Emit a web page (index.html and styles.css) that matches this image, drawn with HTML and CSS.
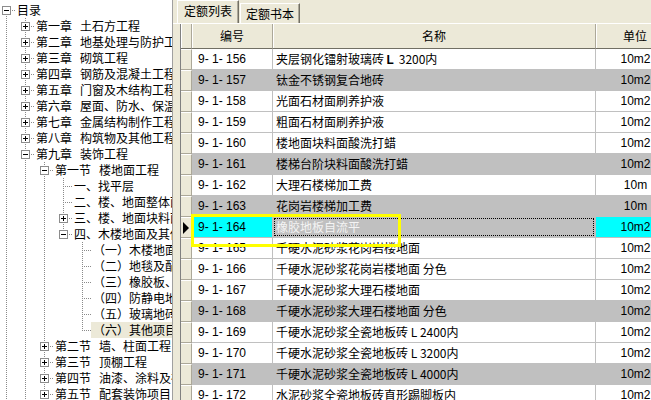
FILE: index.html
```html
<!DOCTYPE html>
<html lang="zh-CN">
<head>
<meta charset="utf-8">
<title>定额列表</title>
<link rel="stylesheet" href="styles.css">
</head>
<body>
<div class="app">
  <div class="tree">
    <div class="node"><i class="b first"><svg class="box" width="9" height="9"><rect x=".5" y=".5" width="8" height="8"/><path d="M2 4.5h5"/></svg></i><span class="t">目录</span></div>
    <div class="node"><i class="g"></i><i class="b"><svg class="box" width="9" height="9"><rect x=".5" y=".5" width="8" height="8"/><path d="M2 4.5h5M4.5 2v5"/></svg></i><span class="t"><span class="k">第一章</span>土石方工程</span></div>
    <div class="node"><i class="g"></i><i class="b"><svg class="box" width="9" height="9"><rect x=".5" y=".5" width="8" height="8"/><path d="M2 4.5h5M4.5 2v5"/></svg></i><span class="t"><span class="k">第二章</span>地基处理与防护工程</span></div>
    <div class="node"><i class="g"></i><i class="b"><svg class="box" width="9" height="9"><rect x=".5" y=".5" width="8" height="8"/><path d="M2 4.5h5M4.5 2v5"/></svg></i><span class="t"><span class="k">第三章</span>砌筑工程</span></div>
    <div class="node"><i class="g"></i><i class="b"><svg class="box" width="9" height="9"><rect x=".5" y=".5" width="8" height="8"/><path d="M2 4.5h5M4.5 2v5"/></svg></i><span class="t"><span class="k">第四章</span>钢筋及混凝土工程</span></div>
    <div class="node"><i class="g"></i><i class="b"><svg class="box" width="9" height="9"><rect x=".5" y=".5" width="8" height="8"/><path d="M2 4.5h5M4.5 2v5"/></svg></i><span class="t"><span class="k">第五章</span>门窗及木结构工程</span></div>
    <div class="node"><i class="g"></i><i class="b"><svg class="box" width="9" height="9"><rect x=".5" y=".5" width="8" height="8"/><path d="M2 4.5h5M4.5 2v5"/></svg></i><span class="t"><span class="k">第六章</span>屋面、防水、保温及防腐工程</span></div>
    <div class="node"><i class="g"></i><i class="b"><svg class="box" width="9" height="9"><rect x=".5" y=".5" width="8" height="8"/><path d="M2 4.5h5M4.5 2v5"/></svg></i><span class="t"><span class="k">第七章</span>金属结构制作工程</span></div>
    <div class="node"><i class="g"></i><i class="b"><svg class="box" width="9" height="9"><rect x=".5" y=".5" width="8" height="8"/><path d="M2 4.5h5M4.5 2v5"/></svg></i><span class="t"><span class="k">第八章</span>构筑物及其他工程</span></div>
    <div class="node"><i class="g"></i><i class="b"><svg class="box" width="9" height="9"><rect x=".5" y=".5" width="8" height="8"/><path d="M2 4.5h5"/></svg></i><span class="t"><span class="k">第九章</span>装饰工程</span></div>
    <div class="node"><i class="g"></i><i class="g"></i><i class="b"><svg class="box" width="9" height="9"><rect x=".5" y=".5" width="8" height="8"/><path d="M2 4.5h5"/></svg></i><span class="t"><span class="k">第一节</span>楼地面工程</span></div>
    <div class="node"><i class="g"></i><i class="g"></i><i class="g"></i><i class="b"></i><span class="t">一、找平层</span></div>
    <div class="node"><i class="g"></i><i class="g"></i><i class="g"></i><i class="b"></i><span class="t">二、楼、地面整体面层</span></div>
    <div class="node"><i class="g"></i><i class="g"></i><i class="g"></i><i class="b"><svg class="box" width="9" height="9"><rect x=".5" y=".5" width="8" height="8"/><path d="M2 4.5h5M4.5 2v5"/></svg></i><span class="t">三、楼、地面块料面层</span></div>
    <div class="node"><i class="g"></i><i class="g"></i><i class="g"></i><i class="b last"><svg class="box" width="9" height="9"><rect x=".5" y=".5" width="8" height="8"/><path d="M2 4.5h5"/></svg></i><span class="t">四、木楼地面及其他</span></div>
    <div class="node"><i class="g"></i><i class="g"></i><i class="g"></i><i class="g off"></i><i class="b"></i><span class="t">（一）木楼地面</span></div>
    <div class="node"><i class="g"></i><i class="g"></i><i class="g"></i><i class="g off"></i><i class="b"></i><span class="t">（二）地毯及配件</span></div>
    <div class="node"><i class="g"></i><i class="g"></i><i class="g"></i><i class="g off"></i><i class="b"></i><span class="t">（三）橡胶板、塑料板</span></div>
    <div class="node"><i class="g"></i><i class="g"></i><i class="g"></i><i class="g off"></i><i class="b"></i><span class="t">（四）防静电地板</span></div>
    <div class="node"><i class="g"></i><i class="g"></i><i class="g"></i><i class="g off"></i><i class="b"></i><span class="t">（五）玻璃地砖</span></div>
    <div class="node"><i class="g"></i><i class="g"></i><i class="g"></i><i class="g off"></i><i class="b last"></i><span class="t sel">（六）其他项目</span></div>
    <div class="node"><i class="g"></i><i class="g"></i><i class="b"><svg class="box" width="9" height="9"><rect x=".5" y=".5" width="8" height="8"/><path d="M2 4.5h5M4.5 2v5"/></svg></i><span class="t"><span class="k">第二节</span>墙、柱面工程</span></div>
    <div class="node"><i class="g"></i><i class="g"></i><i class="b"><svg class="box" width="9" height="9"><rect x=".5" y=".5" width="8" height="8"/><path d="M2 4.5h5M4.5 2v5"/></svg></i><span class="t"><span class="k">第三节</span>顶棚工程</span></div>
    <div class="node"><i class="g"></i><i class="g"></i><i class="b"><svg class="box" width="9" height="9"><rect x=".5" y=".5" width="8" height="8"/><path d="M2 4.5h5M4.5 2v5"/></svg></i><span class="t"><span class="k">第四节</span>油漆、涂料及裱糊工程</span></div>
    <div class="node"><i class="g"></i><i class="g"></i><i class="b"><svg class="box" width="9" height="9"><rect x=".5" y=".5" width="8" height="8"/><path d="M2 4.5h5M4.5 2v5"/></svg></i><span class="t"><span class="k">第五节</span>配套装饰项目</span></div>
  </div>

  <div class="main">
    <div class="tabs">
      <div class="tab active">定额列表</div>
      <div class="tab">定额书本</div>
    </div>
    <div class="page">
      <div class="grid">
        <div class="row head">
          <div class="ind"></div>
          <div class="c code">编号</div>
          <div class="c name">名称</div>
          <div class="c unit">单位</div>
        </div>
        <div class="row"><div class="ind"></div><div class="c code">9- 1- 156</div><div class="c name">夹层钢化镭射玻璃砖<b class="fl">Ｌ</b> 3200内</div><div class="c unit">10m2</div></div>
        <div class="row gray"><div class="ind"></div><div class="c code">9- 1- 157</div><div class="c name">钛金不锈钢复合地砖</div><div class="c unit">10m2</div></div>
        <div class="row"><div class="ind"></div><div class="c code">9- 1- 158</div><div class="c name">光面石材面刷养护液</div><div class="c unit">10m2</div></div>
        <div class="row"><div class="ind"></div><div class="c code">9- 1- 159</div><div class="c name">粗面石材面刷养护液</div><div class="c unit">10m2</div></div>
        <div class="row"><div class="ind"></div><div class="c code">9- 1- 160</div><div class="c name">楼地面块料面酸洗打蜡</div><div class="c unit">10m2</div></div>
        <div class="row gray"><div class="ind"></div><div class="c code">9- 1- 161</div><div class="c name">楼梯台阶块料面酸洗打蜡</div><div class="c unit">10m2</div></div>
        <div class="row"><div class="ind"></div><div class="c code">9- 1- 162</div><div class="c name">大理石楼梯加工费</div><div class="c unit">10m</div></div>
        <div class="row gray"><div class="ind"></div><div class="c code">9- 1- 163</div><div class="c name">花岗岩楼梯加工费</div><div class="c unit">10m</div></div>
        <div class="row current"><div class="ind"><i class="arrow"></i></div><div class="c code">9- 1- 164</div><div class="c name"><span class="focus">橡胶地板自流平</span></div><div class="c unit">10m2</div></div>
        <div class="row"><div class="ind"></div><div class="c code">9- 1- 165</div><div class="c name">千硬水泥砂浆花岗岩楼地面</div><div class="c unit">10m2</div></div>
        <div class="row"><div class="ind"></div><div class="c code">9- 1- 166</div><div class="c name">千硬水泥砂浆花岗岩楼地面 分色</div><div class="c unit">10m2</div></div>
        <div class="row"><div class="ind"></div><div class="c code">9- 1- 167</div><div class="c name">千硬水泥砂浆大理石楼地面</div><div class="c unit">10m2</div></div>
        <div class="row gray"><div class="ind"></div><div class="c code">9- 1- 168</div><div class="c name">千硬水泥砂浆大理石楼地面 分色</div><div class="c unit">10m2</div></div>
        <div class="row"><div class="ind"></div><div class="c code">9- 1- 169</div><div class="c name">千硬水泥砂浆全瓷地板砖 L 2400内</div><div class="c unit">10m2</div></div>
        <div class="row"><div class="ind"></div><div class="c code">9- 1- 170</div><div class="c name">千硬水泥砂浆全瓷地板砖 L 3200内</div><div class="c unit">10m2</div></div>
        <div class="row gray"><div class="ind"></div><div class="c code">9- 1- 171</div><div class="c name">千硬水泥砂浆全瓷地板砖 L 4000内</div><div class="c unit">10m2</div></div>
        <div class="row"><div class="ind"></div><div class="c code">9- 1- 172</div><div class="c name">水泥砂浆全瓷地板砖直形踢脚板内</div><div class="c unit">10m2</div></div>
      </div>
    </div>
    <div class="mark"></div>
  </div>
</div>
</body>
</html>
```

FILE: styles.css
```css
html, body {
  margin: 0;
  padding: 0;
}

body {
  width: 651px;
  height: 400px;
  overflow: hidden;
  background: #ECE9D8;
  font-family: "Noto Sans CJK SC", "Liberation Sans", sans-serif;
  font-size: 12px;
  color: #000;
}

.app {
  display: flex;
  height: 400px;
}

/* ---------- tree ---------- */
.tree {
  width: 173px;
  flex: none;
  background: #fff;
  border-right: 1px solid #a0a0a0;
  overflow: hidden;
  padding-top: 2px;
  padding-left: 2px;
  box-sizing: border-box;
}

.node {
  display: flex;
  height: 16px;
  white-space: nowrap;
}

.g, .b {
  display: block;
  flex: none;
  height: 16px;
}

.g {
  width: 19px;
  background: repeating-linear-gradient(to bottom, #8a8a8a 0 1px, transparent 1px 2px) 4px 0 / 1px 16px no-repeat;
}

.g.off {
  background: none;
}

.b {
  width: 13px;
  display: flex;
  align-items: flex-start;
  background:
    repeating-linear-gradient(to bottom, #8a8a8a 0 1px, transparent 1px 2px) 4px 0 / 1px 8px no-repeat,
    repeating-linear-gradient(to bottom, #8a8a8a 0 1px, transparent 1px 2px) 4px 8px / 1px 8px no-repeat,
    repeating-linear-gradient(to right, #8a8a8a 0 1px, transparent 1px 2px) 4px 8px / 9px 1px no-repeat;
}

.b.last {
  background:
    repeating-linear-gradient(to bottom, #8a8a8a 0 1px, transparent 1px 2px) 4px 0 / 1px 8px no-repeat,
    repeating-linear-gradient(to right, #8a8a8a 0 1px, transparent 1px 2px) 4px 8px / 9px 1px no-repeat;
}

.b.first {
  background:
    repeating-linear-gradient(to bottom, #8a8a8a 0 1px, transparent 1px 2px) 4px 8px / 1px 8px no-repeat,
    repeating-linear-gradient(to right, #8a8a8a 0 1px, transparent 1px 2px) 4px 8px / 9px 1px no-repeat;
}

.box {
  display: block;
  margin-top: 4px;
}

.box rect {
  fill: #fff;
  stroke: #8c8c8c;
}

.box path {
  stroke: #000;
  stroke-width: 1;
  shape-rendering: crispEdges;
}

.t {
  padding: 0 2px;
  line-height: 16px;
  height: 16px;
}

.t.sel {
  background: #ECE9D8;
}

.k {
  margin-right: 8px;
}

/* ---------- main ---------- */
.main {
  flex: 1;
  position: relative;
  overflow: hidden;
  display: flex;
  flex-direction: column;
}

.tabs {
  height: 23px;
  display: flex;
  align-items: flex-end;
  padding-left: 4px;
  flex: none;
}

.tab {
  box-sizing: border-box;
  height: 20px;
  padding: 0 5px;
  line-height: 19px;
  border-top: 1px solid #fff;
  border-left: 1px solid #fff;
  border-right: 1px solid #716F64;
  box-shadow: inset -1px 0 0 #ACA899;
  white-space: nowrap;
}

.tab.active {
  height: 23px;
  padding: 0 6px;
  line-height: 20px;
  margin-right: 1px;
}

.page {
  flex: 1;
  border-top: 1px solid #fff;
  padding-left: 7px;
  overflow: hidden;
}

.grid {
  border-left: 1px solid #808080;
  width: 520px;
}

.row {
  display: grid;
  grid-template-columns: 11px 81px 323px 79px;
  height: 21px;
  background: #fff;
}

.row.gray {
  background: #C0C0C0;
}

.ind {
  background: #ECE9D8;
  border-top: 1px solid #fff;
  border-bottom: 1px solid #ACA899;
  border-right: 1px solid #ACA899;
  box-sizing: border-box;
  display: flex;
  align-items: center;
  padding-left: 2px;
}

.c {
  box-sizing: border-box;
  border-right: 1px solid #C0C0C0;
  border-bottom: 1px solid #C0C0C0;
  line-height: 20px;
  white-space: nowrap;
  overflow: hidden;
}

.code, .unit {
  font-family: "Liberation Sans", Arial, sans-serif;
  font-size: 12px;
}

.code {
  padding-left: 6px;
}

.name {
  padding-left: 3px;
}

.unit {
  text-align: center;
  border-right: none;
}

.fl {
  font-weight: bold;
}

.row.head {
  height: 25px;
}

.head .ind,
.head .c {
  background: #ECE9D8;
  border-top: none;
  border-right: 1px solid #ACA899;
  border-bottom: 1px solid #716F64;
  box-shadow: inset 1px 0 0 #fff;
  text-align: center;
  font-family: "Noto Sans CJK SC", sans-serif;
  line-height: 24px;
  padding: 0;
}

.current .code,
.current .unit {
  background: #00FFFF;
  border-color: #C0C0C0;
}

.current .name {
  background: #C0C0C0;
  padding: 1px 1px 1px 1px;
  line-height: 18px;
}

.focus {
  display: block;
  height: 18px;
  outline: 1px dotted #000;
  outline-offset: -1px;
  padding-left: 2px;
  color: #f4f4f4;
}

.arrow {
  display: block;
  width: 0;
  height: 0;
  border-left: 6px solid #000;
  border-top: 6px solid transparent;
  border-bottom: 6px solid transparent;
}

.mark {
  position: absolute;
  left: 18px;
  top: 214px;
  width: 210px;
  height: 33px;
  box-sizing: border-box;
  border: 3px solid #FFFF00;
}
```
